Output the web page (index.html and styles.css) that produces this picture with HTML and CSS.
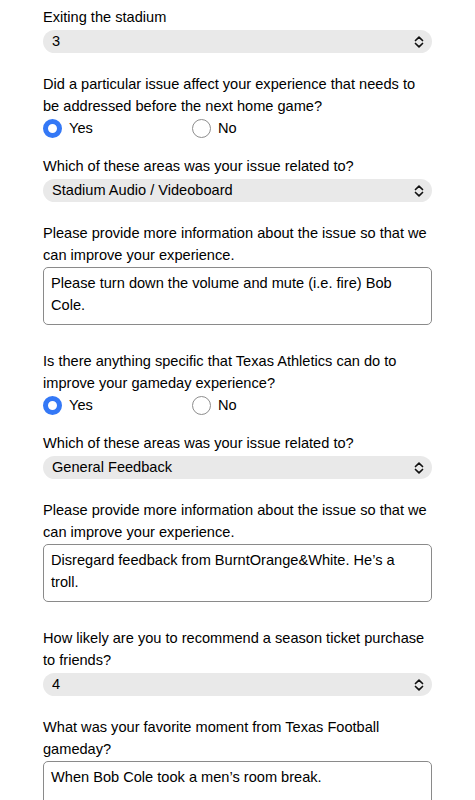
FILE: index.html
```html
<!DOCTYPE html>
<html lang="en">
<head>
<meta charset="utf-8">
<title>Gameday Survey</title>
<link rel="stylesheet" href="styles.css">
</head>
<body>
<form class="survey">
  <div class="q q-select">
    <label class="q-label">Exiting the stadium</label>
    <div class="select-wrap">
      <select class="select"><option>3</option></select>
      <svg class="chev" width="10" height="12" viewBox="0 0 10 12"><path d="M1.5 4.5 L5 1.2 L8.5 4.5 M1.5 7.5 L5 10.8 L8.5 7.5" fill="none" stroke="#111" stroke-width="1.7" stroke-linecap="round" stroke-linejoin="round"/></svg>
    </div>
  </div>

  <div class="q q-radio">
    <div class="q-label">Did a particular issue affect your experience that needs to be addressed before the next home game?</div>
    <div class="radios">
      <label class="opt"><input type="radio" name="r1" checked><span>Yes</span></label>
      <label class="opt"><input type="radio" name="r1"><span>No</span></label>
    </div>
  </div>

  <div class="q q-select">
    <label class="q-label">Which of these areas was your issue related to?</label>
    <div class="select-wrap">
      <select class="select"><option>Stadium Audio / Videoboard</option></select>
      <svg class="chev" width="10" height="12" viewBox="0 0 10 12"><path d="M1.5 4.5 L5 1.2 L8.5 4.5 M1.5 7.5 L5 10.8 L8.5 7.5" fill="none" stroke="#111" stroke-width="1.7" stroke-linecap="round" stroke-linejoin="round"/></svg>
    </div>
  </div>

  <div class="q q-text">
    <label class="q-label">Please provide more information about the issue so that we can improve your experience.</label>
    <textarea class="textarea">Please turn down the volume and mute (i.e. fire) Bob Cole.</textarea>
  </div>

  <div class="q q-radio">
    <div class="q-label">Is there anything specific that Texas Athletics can do to improve your gameday experience?</div>
    <div class="radios">
      <label class="opt"><input type="radio" name="r2" checked><span>Yes</span></label>
      <label class="opt"><input type="radio" name="r2"><span>No</span></label>
    </div>
  </div>

  <div class="q q-select">
    <label class="q-label">Which of these areas was your issue related to?</label>
    <div class="select-wrap">
      <select class="select"><option>General Feedback</option></select>
      <svg class="chev" width="10" height="12" viewBox="0 0 10 12"><path d="M1.5 4.5 L5 1.2 L8.5 4.5 M1.5 7.5 L5 10.8 L8.5 7.5" fill="none" stroke="#111" stroke-width="1.7" stroke-linecap="round" stroke-linejoin="round"/></svg>
    </div>
  </div>

  <div class="q q-text">
    <label class="q-label">Please provide more information about the issue so that we can improve your experience.</label>
    <textarea class="textarea">Disregard feedback from BurntOrange&amp;White. He’s a troll.</textarea>
  </div>

  <div class="q q-select">
    <label class="q-label">How likely are you to recommend a season ticket purchase to friends?</label>
    <div class="select-wrap">
      <select class="select"><option>4</option></select>
      <svg class="chev" width="10" height="12" viewBox="0 0 10 12"><path d="M1.5 4.5 L5 1.2 L8.5 4.5 M1.5 7.5 L5 10.8 L8.5 7.5" fill="none" stroke="#111" stroke-width="1.7" stroke-linecap="round" stroke-linejoin="round"/></svg>
    </div>
  </div>

  <div class="q q-text">
    <label class="q-label">What was your favorite moment from Texas Football gameday?</label>
    <textarea class="textarea">When Bob Cole took a men’s room break.</textarea>
  </div>
</form>
</body>
</html>
```

FILE: styles.css
```css
html, body {
  margin: 0;
  padding: 0;
  background: #fff;
}
body {
  font-family: "Liberation Sans", Arial, sans-serif;
  font-size: 14.6px;
  line-height: 22px;
  color: #000;
}
.survey {
  padding: 6px 43px 0 43px;
}
.q-label {
  display: block;
}
.q-select {
  margin-bottom: 20px;
}
.q-radio {
  margin-bottom: 16px;
}
.q-text {
  margin-bottom: 25px;
}
.select-wrap {
  position: relative;
  margin-top: 2px;
}
.select {
  appearance: none;
  -webkit-appearance: none;
  display: block;
  width: 100%;
  height: 23px;
  margin: 0;
  border: none;
  border-radius: 12px;
  background: #e9e9e9;
  font-family: inherit;
  font-size: 14.6px;
  line-height: 23px;
  color: #000;
  padding: 0 30px 0 9px;
}
.chev {
  position: absolute;
  right: 8px;
  top: 6px;
}
.radios {
  display: flex;
  height: 22px;
  align-items: center;
}
.opt {
  width: 149px;
  display: flex;
  align-items: center;
  gap: 7px;
}
.opt input {
  appearance: none;
  -webkit-appearance: none;
  width: 19px;
  height: 19px;
  margin: 0;
  border-radius: 50%;
  border: 1.5px solid #8e8e8e;
  background: #fff;
  box-sizing: border-box;
}
.opt input:checked {
  border: 5.5px solid #3478f6;
}
.textarea {
  display: block;
  box-sizing: border-box;
  width: 100%;
  height: 58px;
  margin: 1px 0 0 0;
  padding: 4px 7px;
  border: 1px solid #8a8a8a;
  border-radius: 5px;
  font-family: inherit;
  font-size: 14.6px;
  line-height: 22px;
  color: #000;
  resize: none;
  overflow: hidden;
  background: #fff;
}
```
